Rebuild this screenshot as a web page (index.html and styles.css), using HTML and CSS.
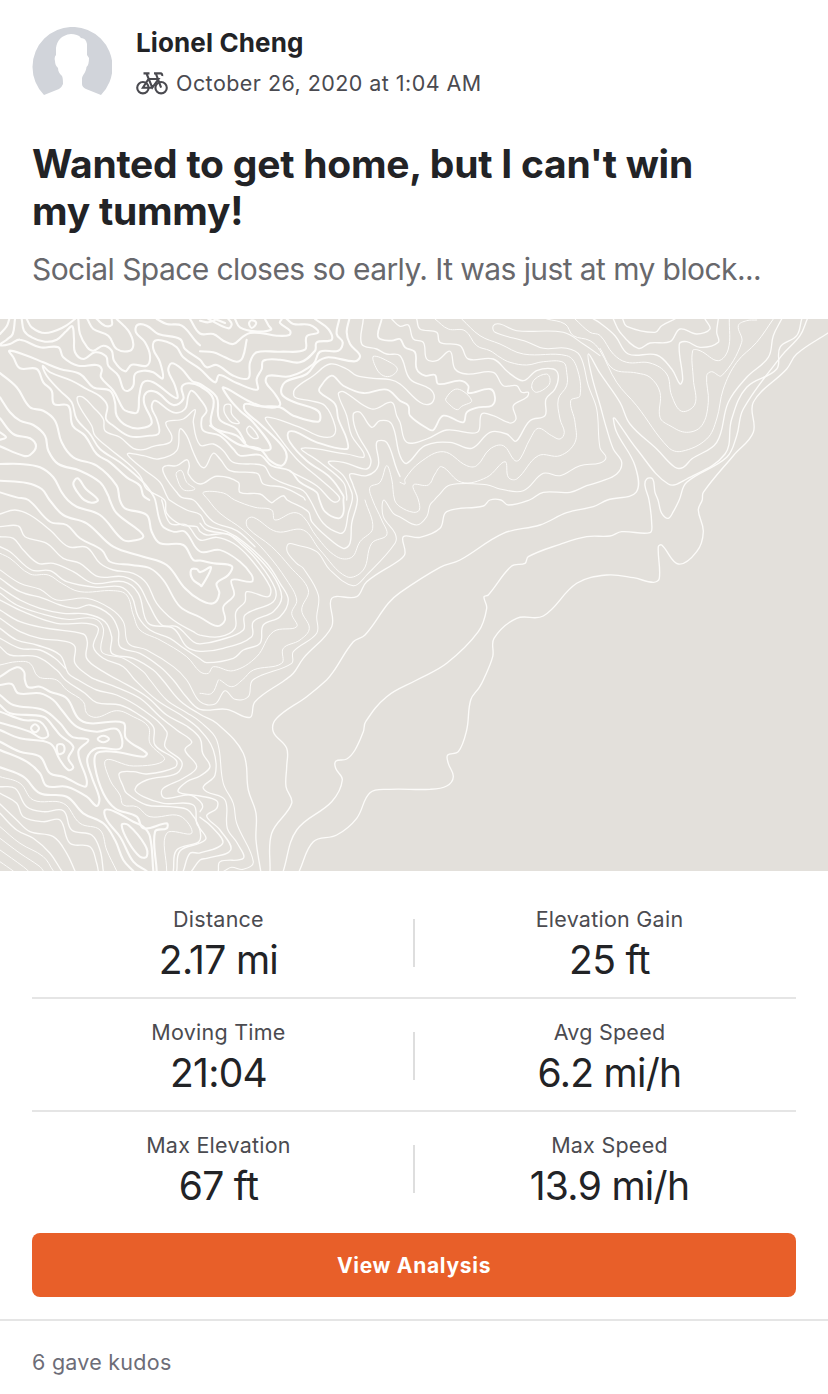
FILE: index.html
```html
<!DOCTYPE html>
<html lang="en">
<head>
<meta charset="utf-8">
<title>Activity</title>
<link rel="stylesheet" href="styles.css">
</head>
<body>
<main class="activity">
  <header class="athlete">
    <svg class="avatar" viewBox="0 0 80 80"><path fill="#d1d4da" d="M12 68A40 40 0 1 1 69 68L54 62Q50 60 50 57V52C50 48 54 46 54.500 40Q57 38 57 31L55 28V17Q54 11 49 11C47 8 43 7 39 7C29 8 25 14 24 21V28Q22 30 23 34C23 37 24 39 26 41C26 45 28 47 30 49Q31 51 31 57Q30 60 27 62Z"/></svg>
    <div class="who">
      <h2 class="name">Lionel Cheng</h2>
      <div class="when">
        <svg class="bike" viewBox="0 0 32 24" fill="none" stroke="#4a4a50" stroke-width="2.100"><circle cx="6.900" cy="16.700" r="5.700"/><circle cx="25.100" cy="16.700" r="5.700"/><path d="M7.500 2.400H13.500M10.500 2.500L16.300 16.700L22.500 8H12.500L6.900 16.700H16.300M25.100 16.700L19.800 2.400M18 2.400H24.500Q26.500 2.500 26.200 5"/></svg>
        <span class="date">October 26, 2020 at 1:04 AM</span>
      </div>
    </div>
  </header>
  <h1 class="title">Wanted to get home, but I can't win<br>my tummy!</h1>
  <p class="note">Social Space closes so early. It was just at my block...</p>
  <svg class="map" viewBox="0 319 828 552"></svg>
  <section class="stats">
    <div class="row"><div class="stat"><span class="label">Distance</span><span class="value">2.17 mi</span></div><i class="rule"></i><div class="stat"><span class="label">Elevation Gain</span><span class="value">25 ft</span></div></div>
    <div class="row"><div class="stat"><span class="label">Moving Time</span><span class="value">21:04</span></div><i class="rule"></i><div class="stat"><span class="label">Avg Speed</span><span class="value">6.2 mi/h</span></div></div>
    <div class="row"><div class="stat"><span class="label">Max Elevation</span><span class="value">67 ft</span></div><i class="rule"></i><div class="stat"><span class="label">Max Speed</span><span class="value">13.9 mi/h</span></div></div>
  </section>
  <button class="analysis">View Analysis</button>
  <footer class="kudos">6 gave kudos</footer>
</main>
<script src="contours.js"></script>
</body>
</html>
```
FILE: styles.css
```css
* { box-sizing: border-box; }
body { margin: 0; background: #fff; color: #222326; font-family: Inter, "Liberation Sans", sans-serif; }
.activity { display: flex; flex-direction: column; height: 1394px; overflow: hidden; }
.athlete { display: flex; flex: none; gap: 24px; height: 140px; padding: 27px 32px 0; }
.avatar { width: 80px; height: 80px; }
.name { margin: 0; font-size: 26px; line-height: 32px; font-weight: 700; letter-spacing: .12px; }
.when { display: flex; align-items: center; gap: 8px; height: 32px; margin-top: 8px; color: #4a4a50; font-size: 21.5px; }
.bike { width: 32px; height: 24px; }
.date { letter-spacing: .45px; white-space: nowrap; }
.title { flex: none; margin: 0 32px; height: 96px; font-size: 39px; line-height: 47px; font-weight: 700; letter-spacing: -.24px; white-space: nowrap; }
.note { flex: none; margin: 0 32px; height: 83px; padding-top: 15px; font-size: 30px; line-height: 36px; letter-spacing: -.58px; color: #68686c; white-space: nowrap; }
.map { display: block; flex: none; width: 828px; height: 552px; background: #e3e0db; }
.contour { fill: none; stroke: #fcfbf9; stroke-linecap: round; stroke-linejoin: round; }
.stats { display: flex; flex: none; flex-direction: column; padding: 16px 32px 0; }
.row { display: flex; align-items: center; height: 113px; padding-top: 3px; border-bottom: 2px solid #e5e5e5; }
.row:last-child { height: 112px; border-bottom: 0; padding-bottom: 1px; }
.row:first-child { height: 112px; padding-top: 2px; }
.stat { flex: 1; display: flex; flex-direction: column; align-items: center; padding: 2px 8px 0 0; }
.rule + .stat { padding: 2px 0 0 8px; }
.label { color: #4b4b50; font-size: 21.5px; line-height: 30px; letter-spacing: .25px; }
.value { font-size: 39px; line-height: 51px; letter-spacing: -.7px; white-space: nowrap; }
.rule { width: 2px; height: 48px; background: #dedede; }
.analysis { flex: none; height: 64px; margin: 9px 32px 22px; border: 0; border-radius: 8px; background: #e85f29; color: #fff; font: 700 21px/64px Inter, sans-serif; letter-spacing: .7px; padding: 1px 0 0; }
.kudos { flex: none; height: 75px; padding: 25px 32px; border-top: 2px solid #e5e5e5; color: #6d6d78; font-size: 21.5px; line-height: 32px; letter-spacing: .25px; }
```
FILE: contours.js
```js
// Terrain sheets: origin, clip window in sheet units (3 per pixel), then heavy / medium / light lines.
// A line is a list of x,y points; a trailing "z" closes it.
const sheets = [
{ at: [0,319], clip: [0,0,600,543], heavy: `
0,45 20,22 28,0
45,0 38,45 20,62 0,78
65,0 72,35 95,55 135,68 170,62 200,35 217,22 222,60 225,100 250,120 285,100 318,112 325,140 355,170 370,210 385,215 400,200 405,165 430,155 460,160 488,178 480,130 460,90 465,65 500,68 530,85 550,115 600,150 630,180
80,0 95,25 135,42 190,25 225,0
235,0 240,45 262,85 280,95 310,80 335,95 342,125 375,157 395,137 440,140 450,110 435,70 408,40 412,18 440,20 475,45 540,60 555,90 600,120 630,145
0,78 30,75 60,62 120,85 175,85 190,115 235,140 290,138 305,150 303,175 340,215 370,270 385,278 412,280 418,230 430,190 460,190 530,238 525,200 505,155 515,133 545,150 575,185 630,212
28,95 75,108 130,130 180,150 240,165 280,205 330,215 345,250 350,290 380,320 420,328 455,312 432,250 440,220 470,220 520,258 550,240 545,205 565,193 600,200 630,225
28,95 40,115 60,148 110,150 130,190 155,215 162,255 205,260 218,320 255,350 290,405 330,430 380,475 420,500 430,530 485,570
262,0 280,30 325,50 350,90 390,95 400,75 385,35 350,0
290,0 315,20 335,18 335,0
470,0 500,15 545,20 590,70 630,105
570,0 600,45 630,50
605,0 630,10
0,162 50,205 90,265 130,275 165,305 185,370 220,415 290,440 350,500 355,540 410,568
0,235 30,280 60,305 100,318 135,350 145,395 175,435 240,455 300,490 325,530 350,570
0,298 40,345 90,358 108,382 90,408 70,410 0,382
0,340 18,355 0,362
0,435 60,435 120,445 160,475 185,520 210,555 265,565
0,485 80,492 125,510 165,570
0,520 50,535 95,545 120,570
220,495 233,478 258,510 298,538 285,550 262,552 240,530 z`, medium: `
128,140 150,160 215,185 260,210 300,232 322,260 318,300 340,320 390,352 450,350 475,345 478,330 470,300 455,265 465,245 520,280 555,270 565,230 575,215 600,240 618,275 605,300 610,320 630,335
128,140 140,170 180,215 215,250 230,300 270,345 300,390 360,430 430,490 460,530 495,570
232,235 250,235 280,265 310,300 315,335 360,355 400,388 430,392 460,382 510,370 515,350 498,310 550,300 585,272 580,310 600,378 630,375
232,235 240,265 275,320 285,350 330,390 380,430 420,470 440,510 490,535 500,570
382,405 430,410 475,420 530,395 540,330 560,350 580,400 605,448 630,410
382,405 430,450 480,490 500,530 520,570`, light: `
630,490 600,495 565,465 568,440 560,422 530,440 500,440 488,450 500,480 530,520 545,535 590,545 600,565
530,460 545,455 560,490 585,510 550,512 530,475 z
` },
{ at: [200,319], clip: [0,0,600,543], heavy: `
25,0 85,28 95,15 85,0
45,0 75,12
148,10 155,4 168,10 165,20 155,27 148,18 z
0,42 40,45 70,65 100,75 130,52 150,42 180,42 230,50 268,48 270,35 240,12 245,0
0,5 25,10 50,0
105,0 120,25 165,37 213,32 205,18 195,0
0,97 40,100 75,115 110,128 128,115 140,62
0,125 20,145 50,138 100,170 145,178 150,130 170,100 240,98 315,92 320,52 355,40 330,18 280,15 260,0
0,150 45,190 58,168 110,192 172,212 170,180 185,150 190,125 240,122 300,130 345,95 350,70 395,62 385,30 345,0
70,205 150,248 200,265 240,258 225,225 198,190 205,170 270,172 340,135 360,98 415,95 428,70 410,45 418,0
135,255 180,262 240,265 280,290 355,308 360,285 345,270 280,248 245,225 255,190 320,165 350,130 385,115 465,127 480,110 450,75 440,40 448,0
70,205 85,235 120,275 160,310 212,388 150,385 110,350 35,320 40,240 0,203
0,193 50,235 58,300 110,330 135,370
135,255 135,275 180,315 250,385 260,415 245,440 210,425 180,390 120,378 60,340 30,320`, medium: `
72,275 75,258 92,258 95,285 118,312 95,310 78,290 z
140,330 150,322 175,355 160,358 145,345 z
0,240 20,275 5,300 10,335 60,350 100,390 120,410 180,408 215,440 270,455 300,490 350,520 365,570
0,378 40,375 70,395 100,430 190,440 215,475 270,500 310,515 350,570
0,440 15,445 40,403 60,420 90,455 150,460 175,465 190,495 250,505 310,535 335,570
0,495 50,472 115,490 120,520 180,525 210,550 250,530 270,550 300,570
198,295 300,325 360,352 400,350 405,320 375,260 330,245 285,235 285,210 340,170 390,135 440,150 470,170 520,178 570,182 600,200 630,220
198,295 230,345 290,420 360,480 415,530 415,550 385,540 350,500 270,457
265,340 285,338 350,370 440,390 440,360 415,300 405,255 360,220 360,205 395,170 430,200 490,222 560,212 600,245 630,290
265,340 270,370 320,425 390,475 430,530 432,570
305,388 440,405 490,415 490,400 455,350 440,290 415,225 430,218 515,270 575,250 590,290 610,340 630,345
305,388 360,430 430,490 440,530 440,570
385,430 430,430 500,450 512,420 470,340 460,285 480,280 515,325 540,305 575,315 600,410 630,430
385,430 430,470 455,520 455,570`, light: `
10,520 70,522 130,555 165,570
10,520 45,560 60,570
450,465 500,470 535,440 530,370 560,370 590,450 610,495 630,480
450,465 460,500 475,570
520,570 510,505 540,490 560,440 575,480 585,560
545,570 545,540 570,570
490,0 485,75 530,90 560,105 600,110 630,150
545,0 535,55 575,65 600,60 630,90
575,0 590,25 630,20
520,112 570,130 592,150 575,170 550,170 530,150 z
` },
{ at: [400,319], clip: [0,0,600,543], heavy: ``, medium: `
50,0 60,30 110,40 120,70 180,80 205,120 280,120 325,160 370,185 410,155 460,150 475,170 465,210 438,240 435,290 390,305 355,360 345,367 320,345 270,340 215,388 150,370 75,380 20,433 0,410
0,20 25,18 40,60 70,70 80,120 110,125 150,97 165,150 200,165 280,160 310,200 350,200 365,220 385,220 380,235 340,260 348,300 330,312 280,290 245,285 232,340 140,333 80,360 20,370 0,305
0,60 15,85 45,100 50,150 75,170 105,168 115,195 180,185 205,200 205,222 270,210 285,235 275,260 235,265 200,280 190,310 130,290 100,333 85,330 30,290 25,260 0,245
0,110 30,180 90,210 103,235 90,255 60,250 0,190
565,105 575,170 600,260 615,340 630,380
565,105 600,160 630,215
580,0 630,35
160,570 260,565 275,535 300,540 350,560 430,520 510,520 560,500 630,478
555,570 630,540`, light: `
105,0 145,30 195,35 230,80 270,95 300,115 330,130 380,138 430,128 490,130 500,160 500,200 475,240 480,300 493,340 480,360 455,350 415,328 390,360 360,420 345,425 310,380 270,390 230,440 200,440 130,398 60,430 15,480 15,495 0,490
185,0 240,50 300,75 370,105 500,110 530,145 540,230 512,245 525,310 525,370 480,410 415,410 350,480 325,475 315,428 260,475 185,490 125,443 105,465 85,498 40,498 60,560 58,570
630,170 600,110 550,75 490,40 350,35 300,15 280,20 285,40 380,68 430,88 500,88 540,110 565,200 590,270 595,380 618,415 610,430 540,440 480,470 430,463 370,515 300,510 260,497 150,498 115,530 85,570
137,240 172,210 215,245 185,262 172,272 150,258 z
395,205 405,180 440,165 450,180 445,200 410,220 z
440,0 495,15 520,50 570,65 600,95 630,140
525,0 570,40 605,50 630,85
` },
{ at: [600,319], clip: [0,0,684,543], heavy: ``, medium: `
0,10 45,50 85,105 170,108 215,150 240,195 248,180 238,75 260,68 300,85 355,70 350,40 355,0
40,0 60,40 115,88 150,72 210,68 240,30 290,45 330,30 315,0
68,0 80,22 165,40 185,20 225,0
0,165 60,250 90,315 170,390 225,445 250,445 275,420 350,370 385,250 440,175 505,115 520,50 545,0
0,255 20,330 40,390 65,430 50,465 0,488
0,385 18,415 0,432
605,0 590,50 540,85 530,150 440,205 395,300 375,405 260,480 205,495 110,390 45,298 40,298 50,340 105,440 108,520 0,550
228,570 260,490 380,415 410,350 430,270 545,110 600,50 622,0
295,570 310,520 400,410 460,340 460,250 560,150 590,105 684,42
150,570 135,500 140,480 158,480 165,520 182,570`, light: `
0,50 40,105 80,130 150,132 200,165 215,230 245,277 285,255 280,180 278,95 300,95 355,125 385,90 388,0
0,88 40,150 110,162 150,175 180,220 180,295 210,320 260,340 305,320 325,250 320,170 335,158 365,170 425,70 415,20 440,5 470,3
0,95 50,190 110,260 205,385 245,397 320,360 350,300 370,210 410,130 470,70 520,0
` },
{ at: [0,500], clip: [0,0,600,540], heavy: `
85,0 150,65 200,75 240,115 305,150 330,185 395,195 450,205 490,240 540,320 630,362
150,0 190,45 260,70 340,140 430,170 500,195 555,265 590,300 630,305
205,0 230,20 300,45 370,120 410,120 430,110 415,90 350,40 325,0
250,0 275,8 295,0
358,0 375,25 440,45 455,95 480,130 550,135 580,180 630,182
460,0 485,75 520,95 555,95 595,155 630,150
573,210 590,207 602,218 633,202 605,258 578,238 z
0,530 50,502 72,515 75,550 100,565 160,570
0,555 45,570`, medium: `
485,0 510,70 560,75 610,125 630,125
495,0 500,40 545,75 590,80 615,108 630,105
0,42 45,30 90,45 150,90 205,140 260,142 300,190 340,210 400,220 440,250 470,310 520,360 580,395 630,410
0,80 55,78 75,110 140,130 190,175 240,190 295,230 370,230 415,255 445,310 485,375 530,380 580,425 630,433
0,110 40,115 70,150 115,190 160,190 220,215 280,250 370,245 415,280 445,370 520,385 560,440 630,457
0,140 30,155 95,210 150,212 200,245 290,262 360,260 395,290 415,350 450,390 510,415 545,440 630,488
0,235 60,275 130,295 180,315 230,325 270,315 330,345 355,390 360,440 420,460 480,500 520,540 540,555
0,262 60,300 120,325 190,340 260,342 315,365 335,410 335,460 400,475 460,510 488,540 500,555
0,330 60,365 140,385 250,402 262,425 260,475 310,515 355,540 390,555
0,355 60,395 120,415 200,425 225,440 225,490 270,530 320,555
0,385 50,420 110,435 180,465 205,520 265,565
0,415 60,445 120,450 165,475 196,505
0,440 30,465 110,470 170,510 210,555`, light: `
510,0 560,30 610,45 615,75 630,75
580,0 630,55
0,160 30,175 90,222 145,225 185,250 240,275 340,272 380,285 400,345 420,390 480,420 560,470 610,520 630,518
0,210 60,250 120,268 170,300 260,295 330,325 370,365 385,430 440,450 520,500 560,540 575,555
0,280 50,315 120,340 200,358 280,355 310,385 305,455 370,475 430,515 450,540 460,555
0,300 70,335 170,370 260,370 295,385 280,440 310,475 370,500 405,540 420,555
0,495 50,485 90,490 115,530 170,540 200,570
` },
{ at: [200,500], clip: [0,0,600,540], heavy: `
0,155 60,150 120,185 155,225 155,245 95,240 102,285 70,320 75,360 52,378 0,355
0,182 40,190 95,198 85,225 50,250 58,280 40,310 0,298
-27,210 -10,207 2,218 33,202 5,258 -22,238 z
205,0 215,8 230,0
360,0 375,35 415,55 430,40 430,0
390,0 405,7 420,0`, medium: `
0,45 20,75 80,95 130,125 200,190 240,250 265,300 240,350 190,375 180,430 130,450 100,475 20,488 0,482
0,70 20,90 90,105 140,140 215,220 245,290 220,335 160,365 155,410 70,445 0,458
0,125 50,112 100,130 150,175 210,260 205,290 140,275 135,305 108,335 105,385 60,410 0,410
0,98 20,105 80,102 120,130 170,180 225,265 220,305 135,345 130,390 60,420 0,435
260,0 325,35 335,65 380,110 430,145 450,130 455,70 475,0
330,0 370,70 420,100 435,90 445,40 458,0
630,110 610,110 612,150 600,180 500,245 470,290 395,295 395,380 310,475 280,520 205,570
630,255 565,310 495,405 460,425 400,515 355,570`, light: `
20,0 60,40 130,90 200,160 260,240 290,300 275,340 290,380 220,395 170,470 100,512 40,500 25,520 0,520
0,20 40,65 110,92 165,140
100,0 165,22 215,30 225,60 280,38 310,50 350,110 410,170 455,172 480,125 518,85 495,0
520,0 545,60 560,105 515,130 490,210 440,230 360,150 310,90 230,95 160,52 140,60 145,85 215,140 270,200 325,270 305,330 328,385 300,420 250,445 245,490 160,510 100,560 60,540 45,570
540,0 550,50 585,100 585,130 500,225 460,257 390,210 350,155 290,135 265,132 262,155 290,190 310,205 355,285 350,350 350,400 280,455 275,490 160,530 150,570
555,0 580,40 630,70
585,0 600,20 630,35
` },
{ at: [400,480], clip: [0,60,960,540], heavy: ``, medium: `
0,238 15,220 10,170 60,172 120,145 140,95 250,78 280,50 325,75 380,68 430,36 510,38 550,15 620,0
0,335 120,262 180,240 310,160 420,135 500,98 580,80 620,60 700,45 710,30 710,0
50,600 140,550 235,455 260,385 252,350 265,345 335,258 375,250 385,230 480,193 560,170 630,168 665,155 750,158 755,130 750,60 735,0
250,600 278,530 282,475 350,415 430,408 530,310 620,285 700,293 760,307 778,295 775,200 785,195 835,252 890,215 910,155 895,90 940,0
760,0 785,100 805,115 820,95 850,30 880,0`, light: `
0,80 40,97 58,90 55,50 40,18
0,110 50,135 80,110 90,75 130,20 160,15 175,18 260,12
` },
{ at: [0,680], clip: [0,0,600,573], heavy: `
75,0 85,22 120,20 150,35 200,55 235,115 270,130 370,128 378,175 440,220 430,230 340,215 290,220 285,260 310,340 345,385 410,410 430,445 500,430 500,445 465,455 470,573
0,15 35,12 55,40 120,40 160,60 185,90 230,140 290,155 352,148 362,205 290,205 262,235 275,290 298,355 290,378 260,350 200,320 140,318 120,280 80,245 0,210
0,45 40,75 130,90 180,130 215,170 265,180 235,215 260,300 255,320 190,290 150,280 120,230 60,215 0,185
0,75 30,100 130,110 160,140 180,165 220,200 205,235 220,262 205,270 180,240 150,190 60,175 0,150
0,95 70,120 120,125 145,165 125,175 90,155 0,128
93,145 105,133 117,145 105,157 z
172,195 190,195 192,215 175,222 z
293,177 310,167 327,177 310,187 z
0,262 70,290 120,340 200,350 250,400 310,430 345,480 370,540 400,573
460,573 450,470 430,440 400,425 345,395 315,390 320,420 360,470 400,545 440,573
365,435 385,435 435,495 440,530 420,530 385,485 z`, medium: `
0,320 45,325 80,380 130,395 190,392 215,450 275,465 300,510 310,573
0,340 50,370 70,410 130,425 180,420 210,490 270,500 290,550 295,573
0,372 50,420 90,455 160,470 200,520 225,573
0,400 50,450 100,475 150,520 185,573
196,0 255,40 290,68 360,75 410,100 460,140 465,195 528,240 525,262 440,282 400,275 358,280 370,320 380,340 440,375 510,380 570,395 600,480 530,510 520,573
238,0 290,30 350,45 430,90 500,155 495,200 545,245 530,280 440,300 405,328 430,350 490,370 580,375 590,430 620,480 540,513 530,573
290,0 350,22 420,55 480,110 530,150 575,185 555,210 590,260 550,295 490,325 485,345 500,355 570,345 600,362
355,0 440,50 500,105 560,138 600,175
600,288 560,305 535,335 600,348
405,0 470,60 550,110 600,150
450,0 500,60 560,98 600,125
488,0 540,62 600,103
550,573 570,520 630,515
575,573 590,545 630,545`, light: `
0,290 60,310 100,360 190,370 240,430 300,450 320,510 350,573
170,0 200,30 250,65 260,100 290,112 350,92 400,110 445,140 450,190 493,240 400,258 318,240 330,300 360,345 370,375 410,380 450,410 540,408 575,460 500,460 500,573
0,440 60,490 130,530 160,573
0,475 60,520 120,560 130,573
0,510 70,560 85,573
0,545 40,573
520,0 560,52 600,88
560,0 600,65
` },
{ at: [200,680], clip: [0,0,900,573], heavy: `
0,175 8,220 30,260 0,288`, medium: `
0,88 80,88 150,112 165,65 260,0
380,0 320,50 230,115 220,155 260,205 260,260 258,320 275,370 215,460 210,573
650,0 560,50 497,125 490,155 465,210 440,237 408,243 407,265 427,300 395,365 290,450 250,573
850,0 838,22 812,60 800,150 775,215 743,225 745,250 760,290 740,318 690,328 570,328 510,338 470,415 410,465 340,485 298,573
0,103 50,130 130,220 145,330 168,400 168,480 182,573
0,150 40,210 45,285 10,320 20,335 75,360 82,445 112,490 130,535 60,545 55,573
0,348 50,362 50,385 20,408 60,450 92,510 20,535 0,535
0,365 8,380 0,395
0,412 35,440 68,490 0,520
0,445 18,475 0,490`, light: `
0,40 35,40 55,0
60,0 95,20 130,0
0,65 45,72 75,32 105,58 145,50 160,0
0,125 50,180 70,310 100,370 110,430 160,545 130,568 95,562 72,573
` }
];

const NS = "http://www.w3.org/2000/svg";
const map = document.querySelector(".map");
const weights = { heavy: 2.1, medium: 1.35, light: 1 };
const REACH = 5;   // how far apart, in pixels, two line ends on a sheet edge may be and still be joined

const dist = (a, b) => Math.hypot(a[0] - b[0], a[1] - b[1]);

// Part of segment a-b inside the window, as [t0, t1], or null.
function inside(a, b, [x, y, w, h]) {
  let t0 = 0, t1 = 1;
  const d = [b[0] - a[0], b[1] - a[1]];
  const tests = [[-d[0], a[0] - x], [d[0], x + w - a[0]], [-d[1], a[1] - y], [d[1], y + h - a[1]]];
  for (const [p, q] of tests) {
    if (p === 0) { if (q < 0) return null; continue; }
    const t = q / p;
    if (p < 0) t0 = Math.max(t0, t); else t1 = Math.min(t1, t);
  }
  return t0 < t1 ? [t0, t1] : null;
}

function cut(points, clip) {
  const parts = [];
  let part = null;
  for (let i = 0; i + 1 < points.length; i++) {
    const a = points[i], b = points[i + 1];
    const span = inside(a, b, clip);
    if (!span) { part = null; continue; }
    const at = t => [a[0] + (b[0] - a[0]) * t, a[1] + (b[1] - a[1]) * t];
    if (!part || span[0] > 0) parts.push(part = [at(span[0])]);
    part.push(at(span[1]));
    if (span[1] < 1) part = null;
  }
  return parts;
}

let lines = [];
sheets.forEach((sheet, s) => {
  for (const w in weights) {
    for (const text of sheet[w].trim().split("\n").filter(Boolean)) {
      const points = text.replace(/ ?z$/, "").trim().split(" ").map(v => v.split(",").map(Number));
      if (text.endsWith("z")) points.push([...points[0]]);
      for (const part of cut(points, sheet.clip)) {
        lines.push({ width: weights[w], ends: [s, s], points: part.map(p => [sheet.at[0] + p[0] / 3, sheet.at[1] + p[1] / 3]) });
      }
    }
  }
});

const seam = p => [200, 400, 600].some(x => Math.abs(p[0] - x) < .01) || [500, 680].some(y => Math.abs(p[1] - y) < .01);

// Collect joinable pairs of ends, nearest first.
const ends = lines.flatMap(line => [0, 1].map(side => ({ line, side, sheet: line.ends[side], p: side ? line.points[line.points.length - 1] : line.points[0] })));
const pairs = [];
for (let i = 0; i < ends.length; i++) {
  for (let j = i + 1; j < ends.length; j++) {
    const a = ends[i], b = ends[j], gap = dist(a.p, b.p);
    const across = a.sheet !== b.sheet && seam(a.p) && seam(b.p) && gap < REACH;
    if (across || gap < .01) pairs.push([gap, a, b]);
  }
}
pairs.sort((m, n) => m[0] - n[0]);

for (const [, a, b] of pairs) {
  if (a.used || b.used) continue;
  a.used = b.used = true;
  const mid = [(a.p[0] + b.p[0]) / 2, (a.p[1] + b.p[1]) / 2];
  if (a.line === b.line) { a.line.closed = true; continue; }
  const first = a.side ? a.line.points : [...a.line.points].reverse();
  const second = b.side ? [...b.line.points].reverse() : b.line.points;
  const head = first.slice(0, -1), tail = second.slice(1);
  if (head.length > 1 && dist(head[head.length - 1], mid) < 4) head.pop();
  if (tail.length > 1 && dist(tail[0], mid) < 4) tail.shift();
  const joined = { width: (a.line.width + b.line.width) / 2, points: [...head, mid, ...tail] };
  const lineA = a.line, lineB = b.line;
  for (const e of ends) {
    if (e === a || e === b) continue;
    if (e.line === lineA) { e.line = joined; e.side = 0; }
    else if (e.line === lineB) { e.line = joined; e.side = 1; }
  }
  lines = lines.filter(l => l !== lineA && l !== lineB);
  lines.push(joined);
}

// Smooth curve through every point, with handles scaled to each segment's length.
function smooth({ points, closed }) {
  const p = closed ? points.slice(0, -1) : points;
  const n = p.length;
  const pt = i => closed ? p[(i + n) % n] : p[Math.max(0, Math.min(n - 1, i))];
  const handle = (i, dir) => {
    const a = pt(i - 1), b = pt(i), c = pt(i + 1);
    const total = dist(a, b) + dist(b, c) || 1;
    const k = dir * 0.38 * dist(b, dir > 0 ? c : a) / total;
    return [b[0] + (c[0] - a[0]) * k, b[1] + (c[1] - a[1]) * k];
  };
  const f = q => q.map(v => v.toFixed(1));
  let d = "M" + f(p[0]);
  for (let i = 0; i < (closed ? n : n - 1); i++) {
    d += "C" + f(handle(i, 1)) + " " + f(handle(i + 1, -1)) + " " + f(pt(i + 1));
  }
  return d;
}

for (const line of lines) {
  const path = document.createElementNS(NS, "path");
  path.setAttribute("class", "contour");
  path.setAttribute("d", smooth(line));
  path.setAttribute("stroke-width", line.width);
  map.appendChild(path);
}
```
